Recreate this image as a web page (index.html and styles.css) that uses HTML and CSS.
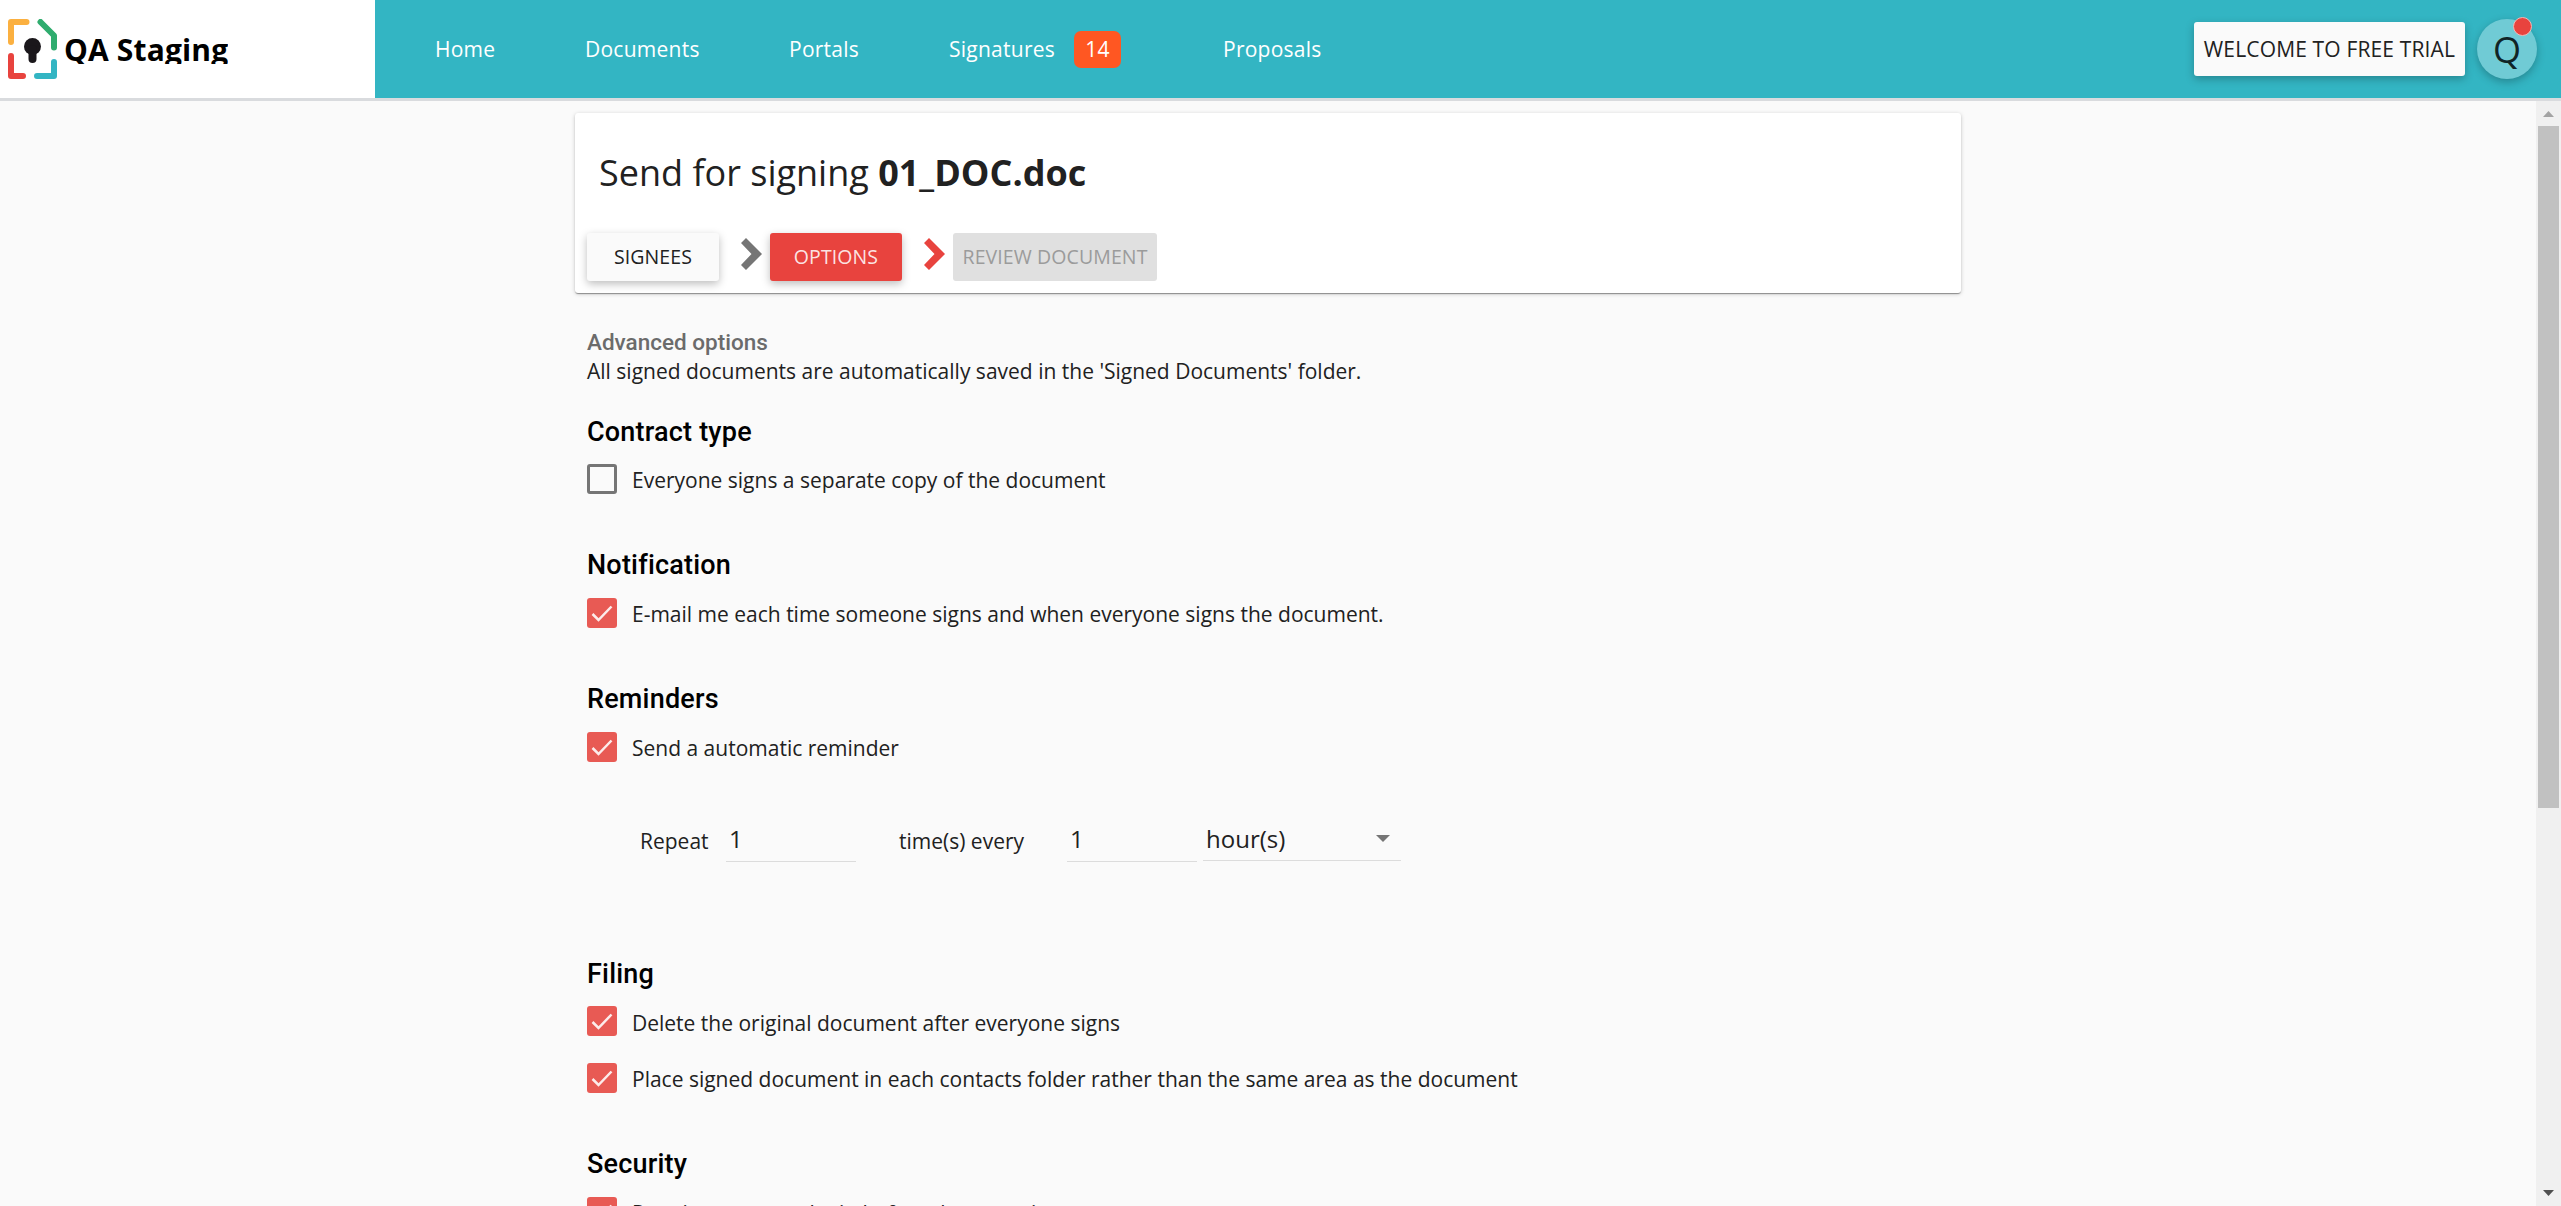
FILE: index.html
```html
<!DOCTYPE html>
<html lang="en">
<head>
<meta charset="utf-8">
<title>QA Staging</title>
<link rel="stylesheet" href="styles.css">
</head>
<body>
<header class="topbar">
  <div class="brand">
    <svg class="logo" width="49" height="60" viewBox="0 0 49 60" fill="none" stroke-width="6" stroke-linecap="round" stroke-linejoin="round">
      <path d="M3 23V3H18.500" stroke="#fbb040"/>
      <path d="M32.500 3L46 16.500V28.500" stroke="#2fac6e"/>
      <path d="M3 37V57H15" stroke="#e8433e"/>
      <path d="M46 43V57H29" stroke="#33b5c3"/>
      <circle cx="24.500" cy="27.500" r="8.500" fill="#1a171b"/>
      <path d="M24.500 30V40" stroke="#1a171b" stroke-width="8"/>
    </svg>
    <span class="brand-name">QA Staging</span>
  </div>
  <nav class="nav">
    <a class="home">Home</a>
    <a class="documents">Documents</a>
    <a class="portals">Portals</a>
    <a class="signatures">Signatures <span class="badge">14</span></a>
    <a>Proposals</a>
  </nav>
  <button class="trial">WELCOME TO FREE TRIAL</button>
  <div class="avatar">Q<span class="dot"></span></div>
</header>
<div class="viewport">
  <main class="content">
    <section class="card">
      <h1 class="title">Send for signing <b>01_DOC.doc</b></h1>
      <div class="steps">
        <button class="step">SIGNEES</button>
        <svg class="chevron" width="21" height="32" viewBox="0 0 21 32"><path d="M5 0L21 16L5 32L0 27L10.500 16L0 5Z" fill="#757575"/></svg>
        <button class="step active">OPTIONS</button>
        <svg class="chevron" width="21" height="32" viewBox="0 0 21 32"><path d="M5 0L21 16L5 32L0 27L10.500 16L0 5Z" fill="#e8433e"/></svg>
        <button class="step disabled">REVIEW DOCUMENT</button>
      </div>
    </section>
    <div class="options">
      <h3 class="advanced">Advanced options</h3>
      <p class="intro">All signed documents are automatically saved in the 'Signed Documents' folder.</p>
      <section class="group contract">
        <h2>Contract type</h2>
        <label class="check"><span class="box"></span>Everyone signs a separate copy of the document</label>
      </section>
      <section class="group notification">
        <h2>Notification</h2>
        <label class="check"><span class="box on"><svg width="30" height="30" viewBox="0 0 30 30"><path d="M5.500 16L11.500 22L24.500 8.500"/></svg></span>E-mail me each time someone signs and when everyone signs the document.</label>
      </section>
      <section class="group reminders">
        <h2>Reminders</h2>
        <label class="check"><span class="box on"><svg width="30" height="30" viewBox="0 0 30 30"><path d="M5.500 16L11.500 22L24.500 8.500"/></svg></span>Send a automatic reminder</label>
        <div class="repeat">
          <span class="repeat-label">Repeat</span>
          <span class="field">1</span>
          <span class="every-label">time(s) every</span>
          <span class="field">1</span>
          <span class="select">hour(s)<svg width="14" height="7" viewBox="0 0 14 7"><path d="M0 0H14L7 7Z" fill="#757575"/></svg></span>
        </div>
      </section>
      <section class="group filing">
        <h2>Filing</h2>
        <label class="check first"><span class="box on"><svg width="30" height="30" viewBox="0 0 30 30"><path d="M5.500 16L11.500 22L24.500 8.500"/></svg></span>Delete the original document after everyone signs</label>
        <label class="check second"><span class="box on"><svg width="30" height="30" viewBox="0 0 30 30"><path d="M5.500 16L11.500 22L24.500 8.500"/></svg></span>Place signed document in each contacts folder rather than the same area as the document</label>
      </section>
      <section class="group security">
        <h2>Security</h2>
        <label class="check"><span class="box on"><svg width="30" height="30" viewBox="0 0 30 30"><path d="M5.500 16L11.500 22L24.500 8.500"/></svg></span>Require everyone login before they can sign</label>
      </section>
    </div>
  </main>
  <div class="scrollbar">
    <svg class="up" width="11" height="6" viewBox="0 0 11 6"><path d="M0 6L5.500 0L11 6Z" fill="#a3a3a3"/></svg>
    <div class="thumb"></div>
    <svg class="down" width="11" height="6" viewBox="0 0 11 6"><path d="M0 0H11L5.500 6Z" fill="#505050"/></svg>
  </div>
</div>
</body>
</html>
```
FILE: styles.css
```css
* { box-sizing: border-box; }
html, body { height: 100%; overflow: hidden; }
body {
  margin: 0;
  display: flex;
  flex-direction: column;
  background: #fafafa;
  color: #212121;
  font-family: "Open Sans", "Noto Sans", sans-serif;
  font-size: 21px;
}
button { border: 0; padding: 0; font: inherit; color: inherit; }
svg { display: block; flex: none; }

.topbar {
  flex: none;
  height: 101px;
  border-bottom: 3px solid #d9dbde;
  background: #33b5c3;
  display: flex;
  align-items: center;
}
.brand {
  width: 375px;
  height: 98px;
  padding-left: 8px;
  background: #fff;
  display: flex;
  align-items: center;
  gap: 7px;
}
.brand-name {
  height: 30px;
  line-height: 31px;
  overflow: hidden;
  color: #000;
  font-size: 30px;
  font-weight: 700;
  letter-spacing: .15px;
}
.nav { display: flex; align-items: center; margin-left: 60px; color: #fff; font-size: 21px; font-weight: 500; letter-spacing: .25px; white-space: nowrap; }
.home { width: 150px; }
.documents { width: 204px; }
.portals { width: 160px; }
.signatures { width: 274px; display: flex; align-items: center; gap: 19px; }
.badge { width: 47px; height: 37px; border-radius: 7px; background: #ff5722; line-height: 37px; text-align: center; }
.trial {
  margin-left: auto;
  width: 271px;
  height: 54px;
  border-radius: 3px;
  background: #fafafa;
  box-shadow: 0 3px 8px rgba(0, 0, 0, .26);
  letter-spacing: .15px;
  white-space: nowrap;
}
.avatar {
  position: relative;
  width: 60px;
  height: 60px;
  margin: 0 24px 0 12px;
  border-radius: 50%;
  background: #70cbd5;
  box-shadow: 0 3px 8px rgba(0, 0, 0, .26);
  color: #102426;
  font-size: 36px;
  line-height: 62px;
  text-align: center;
}
.dot { position: absolute; right: 5px; top: -2px; width: 19px; height: 19px; border: 1px solid #f5b5b3; border-radius: 50%; background: #e8433e; }

.viewport { flex: 1; min-height: 0; display: flex; }
.content { flex: 1; padding: 12px 0 0 575px; overflow: hidden; }
.card {
  width: 1386px;
  height: 180px;
  padding: 35px 12px 12px;
  border-radius: 3px;
  background: #fff;
  box-shadow: 0 1px 4px rgba(0, 0, 0, .2), 0 1px 1px rgba(0, 0, 0, .2), 0 2px 1px -1px rgba(0, 0, 0, .2);
}
.title { margin: 0 0 35px; padding-left: 12px; font-size: 36px; font-weight: 400; line-height: 50px; }
.title b { font-weight: 700; }
.steps { display: flex; align-items: center; }
.step { width: 132px; height: 48px; padding-bottom: 2px; border-radius: 3px; background: #fafafa; box-shadow: 0 3px 8px rgba(0, 0, 0, .26); font-size: 19.500px; letter-spacing: .1px; white-space: nowrap; }
.step.active { background: #e8433e; color: rgba(255, 255, 255, .87); }
.step.disabled { width: 204px; background: #e0e0e0; box-shadow: none; color: #9b9b9b; }
.chevron { margin: -6px 8px 0 22px; }

.options { padding-left: 12px; }
.advanced { margin: 35px 0 0; color: #6b6b6b; font: 500 22.500px/28px Roboto, sans-serif; }
.intro { margin: 0; line-height: 30px; }
.group h2 { margin: 0; color: #000; font: 500 27px/36px Roboto, sans-serif; letter-spacing: .2px; }
.check { display: flex; align-items: center; gap: 15px; height: 30px; margin-top: 15px; padding-top: 2px; white-space: nowrap; }
.box { flex: none; width: 30px; height: 30px; margin-top: -2px; border: 3px solid #757575; border-radius: 3px; }
.box.on { border: 0; background: #e85a54; }
.box path { fill: none; stroke: #fceceb; stroke-width: 2.500; }
.contract { margin-top: 28px; }
.contract .check { margin-top: 14px; }
.notification, .reminders { margin-top: 53px; }
.check.second { margin-top: 27px; }
.repeat { display: flex; align-items: flex-start; height: 45px; margin: 54px 0 0 53px; line-height: 50px; }
.repeat-label { width: 86px; }
.field { width: 130px; height: 46px; padding-left: 3px; border-bottom: 1px solid #dcdcdc; font-size: 24px; line-height: 46px; }
.every-label { width: 168px; margin-left: 43px; }
.select { width: 198px; height: 45px; margin-left: 6px; padding: 1px 11px 0 3px; border-bottom: 1px solid #dcdcdc; display: flex; align-items: center; justify-content: space-between; font-size: 24px; line-height: 46px; }
.filing { margin-top: 95px; }
.filing .first { margin-top: 14px; padding-top: 4px; }
.filing .first .box { margin-top: -4px; }
.security { margin-top: 53px; }

.scrollbar { width: 25px; background: #f0f0f0; display: flex; flex-direction: column; align-items: center; }
.up { margin: 10px 0 9px; }
.thumb { width: 21px; height: 682px; background: #c1c1c1; }
.down { margin: auto 0 10px; }
```
